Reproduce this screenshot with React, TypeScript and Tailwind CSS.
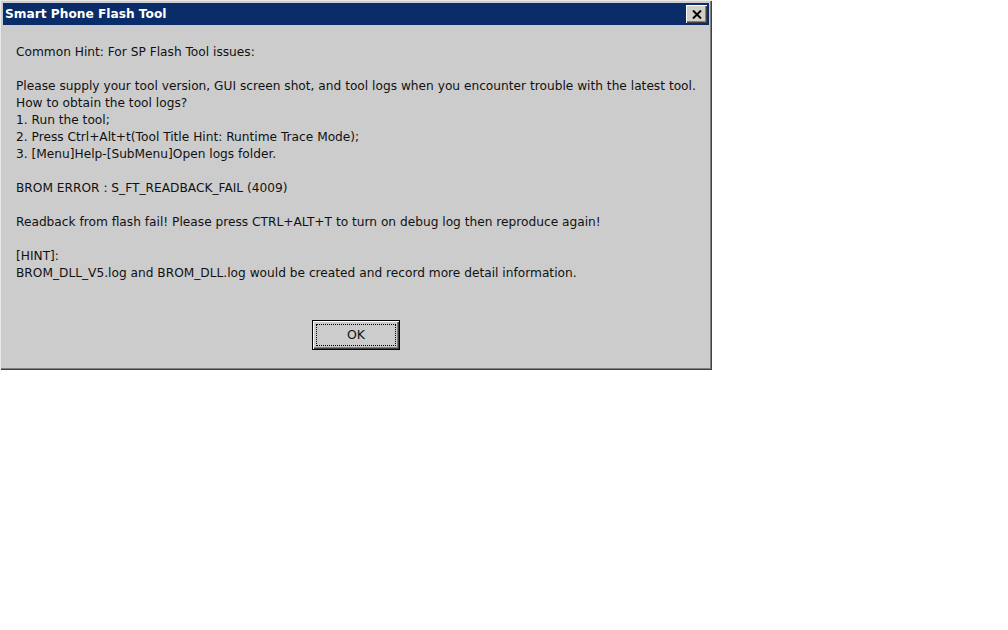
import React from "react";

export default function App() {
  const lines = [
    "Common Hint: For SP Flash Tool issues:",
    "",
    "Please supply your tool version, GUI screen shot, and tool logs when you encounter trouble with the latest tool.",
    "How to obtain the tool logs?",
    "1. Run the tool;",
    "2. Press Ctrl+Alt+t(Tool Title Hint: Runtime Trace Mode);",
    "3. [Menu]Help-[SubMenu]Open logs folder.",
    "",
    "BROM ERROR : S_FT_READBACK_FAIL (4009)",
    "",
    "Readback from flash fail! Please press CTRL+ALT+T to turn on debug log then reproduce again!",
    "",
    "[HINT]:",
    "BROM_DLL_V5.log and BROM_DLL.log would be created and record more detail information.",
  ];

  return (
    <div className="w-[1008px] h-[630px] bg-white" style={{ fontFamily: "Tahoma, 'DejaVu Sans', 'Liberation Sans', sans-serif" }}>
      {/* dialog window */}
      <div className="w-[712px] h-[370px] bg-[#cccccc] flex flex-col p-[3px] shadow-[inset_1px_1px_0_#e8e8e8,inset_-1px_-1px_0_#404040,inset_-2px_-2px_0_#808080]">
        <div className="h-[22px] bg-[#0a2c68] flex items-center justify-between pl-[2px] pr-[2px]">
          <span className="text-white font-bold text-[12.2px] leading-none">Smart Phone Flash Tool</span>
          <button className="w-[21px] h-[18px] bg-[#d4d0c8] flex items-center justify-center shadow-[inset_1px_1px_0_#ffffff,inset_-1px_-1px_0_#404040,inset_-2px_-2px_0_#808080]">
            <svg width="10" height="9" viewBox="0 0 10 9">
              <path d="M1 0.5 L9 8.5 M9 0.5 L1 8.5" stroke="#000" strokeWidth="2" />
            </svg>
          </button>
        </div>

        <div className="flex-1 flex flex-col pl-[13px] pt-[19px]">
          <div className="text-[12.2px] leading-[17px] text-[#111]">
            {lines.map((l, i) => (
              <div key={i} className="h-[17px] whitespace-nowrap">{l}</div>
            ))}
          </div>
          <div className="flex mt-[38px] ml-[296px]">
            <button className="w-[88px] h-[30px] bg-[#cccccc] border border-black p-[3px] shadow-[inset_1px_1px_0_#ffffff,inset_-1px_-1px_0_#404040,inset_-2px_-2px_0_#808080]">
              <div className="w-full h-full border border-dotted border-black flex items-center justify-center text-[12.5px] text-[#111]">
                OK
              </div>
            </button>
          </div>
        </div>
      </div>
    </div>
  );
}
